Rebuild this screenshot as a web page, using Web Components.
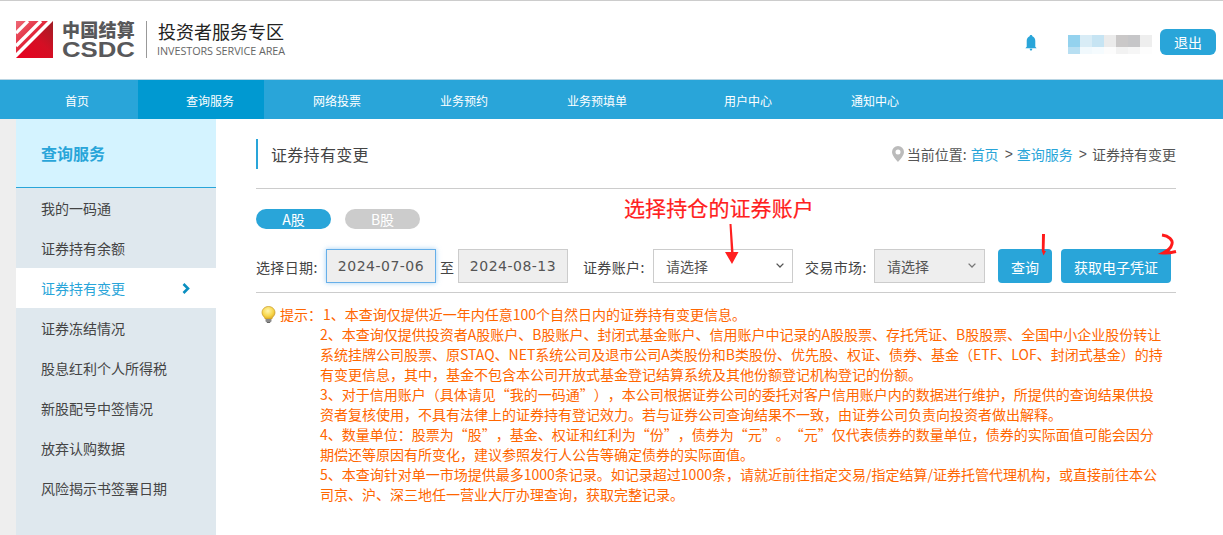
<!DOCTYPE html>
<html lang="zh-CN">
<head>
<meta charset="utf-8">
<title>证券持有变更</title>
<style>
html,body{margin:0;padding:0;background:#fff}
body{font-family:"Noto Sans CJK SC","Noto Sans",sans-serif;font-size:14px;color:#444;height:535px;overflow:hidden;border-top:1px solid #ccc;box-sizing:border-box;text-spacing-trim:space-all}
</style>
</head>
<body>
<csdc-header></csdc-header>
<csdc-nav>
  <csdc-nav-item style="--w:121px;--pl:48px">首页</csdc-nav-item>
  <csdc-nav-item active style="--w:126px;--pl:48px">查询服务</csdc-nav-item>
  <csdc-nav-item>网络投票</csdc-nav-item>
  <csdc-nav-item>业务预约</csdc-nav-item>
  <csdc-nav-item>业务预填单</csdc-nav-item>
  <csdc-nav-item style="margin-left:30px">用户中心</csdc-nav-item>
  <csdc-nav-item>通知中心</csdc-nav-item>
</csdc-nav>
<csdc-layout>
  <csdc-sidebar slot="side" heading="查询服务">
    <csdc-side-item>我的一码通</csdc-side-item>
    <csdc-side-item>证券持有余额</csdc-side-item>
    <csdc-side-item active>证券持有变更</csdc-side-item>
    <csdc-side-item>证券冻结情况</csdc-side-item>
    <csdc-side-item>股息红利个人所得税</csdc-side-item>
    <csdc-side-item>新股配号中签情况</csdc-side-item>
    <csdc-side-item>放弃认购数据</csdc-side-item>
    <csdc-side-item>风险揭示书签署日期</csdc-side-item>
  </csdc-sidebar>
  <csdc-main>
    <csdc-title-row>证券持有变更</csdc-title-row>
    <csdc-tabs></csdc-tabs>
    <csdc-query-form></csdc-query-form>
    <csdc-notes>
      <p>1、本查询仅提供近一年内任意100个自然日内的证券持有变更信息。</p>
      <p>2、本查询仅提供投资者A股账户、B股账户、封闭式基金账户、信用账户中记录的A股股票、存托凭证、B股股票、全国中小企业股份转让系统挂牌公司股票、原STAQ、NET系统公司及退市公司A类股份和B类股份、优先股、权证、债券、基金（ETF、LOF、封闭式基金）的持有变更信息，其中，基金不包含本公司开放式基金登记结算系统及其他份额登记机构登记的份额。</p>
      <p>3、对于信用账户（具体请见“我的一码通”），本公司根据证券公司的委托对客户信用账户内的数据进行维护，所提供的查询结果供投资者复核使用，不具有法律上的证券持有登记效力。若与证券公司查询结果不一致，由证券公司负责向投资者做出解释。</p>
      <p>4、数量单位：股票为“股”，基金、权证和红利为“份”，债券为“元”。“元”仅代表债券的数量单位，债券的实际面值可能会因分期偿还等原因有所变化，建议参照发行人公告等确定债券的实际面值。</p>
      <p>5、本查询针对单一市场提供最多1000条记录。如记录超过1000条，请就近前往指定交易/指定结算/证券托管代理机构，或直接前往本公司京、沪、深三地任一营业大厅办理查询，获取完整记录。</p>
    </csdc-notes>
    <csdc-annotations></csdc-annotations>
  </csdc-main>
</csdc-layout>
<script>
function def(name, html, init){
  customElements.define(name, class extends HTMLElement{
    constructor(){super();this.attachShadow({mode:'open'}).innerHTML=html;}
    connectedCallback(){ if(init) init(this); }
  });
}
const BLUE='#29a5d9';

def('csdc-logo',`<style>
:host{display:flex;align-items:center;height:37px}
svg{display:block;flex:none}
.words{margin-left:9px;width:73px;display:flex;flex-direction:column;justify-content:space-between;height:37px;color:#58585a}
.cn{font-size:18px;line-height:18px;height:18px;font-weight:900;letter-spacing:.25px;white-space:nowrap;margin-top:-1px}
.en{font-family:"Liberation Sans",sans-serif;font-size:22px;line-height:17px;height:17px;font-weight:700;transform:scaleX(1.17);transform-origin:0 50%;white-space:nowrap}
</style>
<svg width="37" height="37" viewBox="0 0 37 37">
<defs>
<linearGradient id="g" x1="0" y1="1" x2="1" y2="0"><stop offset="0" stop-color="#e8001f"/><stop offset=".55" stop-color="#d40f24"/><stop offset="1" stop-color="#9d1f26"/></linearGradient>
<linearGradient id="p" x1="0" y1="0" x2="1" y2="1"><stop offset="0" stop-color="#ee6a78"/><stop offset=".5" stop-color="#e01a2e"/></linearGradient>
</defs>
<rect width="37" height="37" fill="url(#g)"/>
<path d="M0 37V0H37Z" fill="url(#p)"/>
<path d="M0 36.500L36.500 0" stroke="#fff" stroke-width="3.600" fill="none" transform="translate(-1 -1)"/>
<path d="M0 25L25 0" stroke="#fff" stroke-width="3.400" fill="none"/>
<path d="M0 12L12 0" stroke="#fff" stroke-width="3.200" fill="none"/>
</svg>
<div class="words"><div class="cn">中国结算</div><div class="en">CSDC</div></div>`);

def('csdc-mosaic',`<style>
:host{display:grid;grid-template-columns:repeat(7,12px);grid-template-rows:12px 7px;width:84px;height:19px}
i{display:block}
</style>`+['#94d2ee','#d8ecf6','#c6e4f3','#ebebeb','#cac8c8','#c6c6c8','#eeeeee','#b8dff2','#f1f9fd','#f5fbfe','#fcfcfc','#f2f2f2','#f6f6f6','#fdfdfd'].map(c=>`<i style="background:${c}"></i>`).join(''));

def('csdc-header',`<style>
:host{display:flex;align-items:center;height:78px;padding:0 7px 2px 16px;background:#fff;box-sizing:border-box}
.sep{width:1px;height:37px;background:#999;margin:0 11px 0 11px}
.brand{display:flex;flex-direction:column;height:37px;justify-content:space-between}
.t{font-size:18px;line-height:20px;color:#222;white-space:nowrap;margin-top:0}
.s{font-family:"Open Sans",sans-serif;font-size:10.800px;line-height:14px;color:#666;white-space:nowrap;margin-left:-1px;letter-spacing:-.05px}
.sp{flex:1}
svg{display:block;margin-top:8px}
csdc-mosaic{margin:11px 8px 0 31px}
.out{width:56px;height:26px;margin-top:6px;border-radius:6px;background:${BLUE};color:#fff;font-size:14px;line-height:26px;text-align:center}
</style>
<csdc-logo></csdc-logo><div class="sep"></div>
<div class="brand"><div class="t">投资者服务专区</div><div class="s">INVESTORS SERVICE AREA</div></div>
<div class="sp"></div>
<svg width="12" height="16" viewBox="0 0 14 17" preserveAspectRatio="none"><path fill="${BLUE}" d="M7 0c.9 0 1.500.5 1.600 1.200C10.700 1.900 12 3.800 12 6.200V12.600L13.600 14H.4L2 12.600V6.200C2 3.800 3.300 1.900 5.400 1.200 5.500.5 6.100 0 7 0ZM5.500 14.700H8.500C8.500 15.900 7.800 16.700 7 16.700S5.500 15.900 5.500 14.700Z"/></svg>
<csdc-mosaic></csdc-mosaic>
<div class="out">退出</div>`);

def('csdc-nav',`<style>
:host{display:flex;height:40px;padding-left:17px;background:${BLUE};border-top:1px solid #b9d5e3;box-sizing:border-box}
</style><slot></slot>`);

def('csdc-nav-item',`<style>
:host{display:block;box-sizing:border-box;width:var(--w,127px);padding-left:var(--pl,49px);height:39px;line-height:41px;font-size:12px;color:#fff;white-space:nowrap;flex:none}
:host([active]){background:#0099d1}
</style><slot></slot>`);

def('csdc-layout',`<style>
:host{display:flex;height:416px;padding-left:16px;background:linear-gradient(90deg,#eee 16px,#fff 16px);box-sizing:border-box}
</style><slot name="side"></slot><slot></slot>`);

def('csdc-sidebar',`<style>
:host{display:block;width:200px;flex:none;background:#dfe8ee;height:100%}
h2{margin:0;height:69px;box-sizing:border-box;padding-left:25px;background:#d4f3ff;border-bottom:1px solid ${BLUE};font-size:16px;line-height:68px;font-weight:700;color:${BLUE}}
</style><h2></h2><slot></slot>`,el=>{el.shadowRoot.querySelector('h2').textContent=el.getAttribute('heading');});

def('csdc-side-item',`<style>
:host{display:flex;align-items:center;justify-content:space-between;height:40px;padding:0 26px 0 25px;font-size:14px;color:#444}
:host([active]){background:#fff;color:${BLUE}}
svg{display:none}
:host([active]) svg{display:block}
</style><span><slot></slot></span><svg width="8" height="11" viewBox="0 0 8 11"><path d="M1.500 1L6 5.500L1.500 10" fill="none" stroke="#0a8fc0" stroke-width="2.600"/></svg>`);

def('csdc-main',`<style>
:host{display:block;position:relative;flex:none;width:920px;margin-left:40px}
</style><slot></slot>`);

def('csdc-title-row',`<style>
:host{display:flex;align-items:center;justify-content:space-between;height:30px;padding-top:20px;padding-bottom:19px;box-sizing:content-box;border-bottom:1px solid #ccc}
.t{border-left:2px solid ${BLUE};padding-left:13px;height:30px;line-height:30px;font-size:16px;letter-spacing:.3px;color:#444}
.c{display:flex;align-items:center;font-size:14px;color:#555;white-space:nowrap;height:30px}
svg{display:block;margin-right:3px}
a{color:${BLUE};text-decoration:none}
.g{font-family:"Liberation Sans",sans-serif}
.h{margin-left:4px}
</style>
<div class="t"><slot></slot></div>
<div class="c"><svg width="12" height="16" viewBox="0 0 12 16"><path fill-rule="evenodd" fill="#bbb" d="M6 0a6 6 0 0 1 6 6C12 9.500 8 13.500 6 16 4 13.500 0 9.500 0 6a6 6 0 0 1 6-6ZM6 3.500a2.500 2.500 0 1 0 0 5 2.500 2.500 0 0 0 0-5Z"/></svg>
<span>当前位置:</span><a class="h">首页</a><span class="g" style="margin:0 4px 0 6px">&gt;</span><a>查询服务</a><span class="g" style="margin:0 5px 0 6px">&gt;</span><span>证券持有变更</span></div>`);

def('csdc-tabs',`<style>
:host{display:flex;gap:14px;margin-top:20px}
span{width:75px;height:20px;border-radius:10px;text-align:center;line-height:20px;font-size:14px;color:#fff;background:#ccc}
.on{background:${BLUE}}
</style><span class="on">A股</span><span>B股</span>`);

def('csdc-select',`<style>
:host{display:block;position:relative;flex:none}
select{display:block;width:100%;box-sizing:border-box;height:34px;border:1px solid #ccc;border-radius:0;font:14px "Noto Sans CJK SC",sans-serif;color:#555;background:var(--bg,#fff);padding:0 12px;margin:0;appearance:none;-webkit-appearance:none}
svg{position:absolute;right:9px;top:14px;pointer-events:none}
</style><select><option>请选择</option></select><svg width="8" height="5" viewBox="0 0 8 5"><path d="M.6.6L4 4L7.400.6" fill="none" stroke="var(--ch,#555)" stroke-width="1.300"/></svg>`);

def('csdc-query-form',`<style>
:host{display:flex;margin-top:20px;height:44px;box-sizing:border-box;align-items:flex-start;border-bottom:1px solid #ccc;font-size:14px;color:#444}
label{display:block;white-space:nowrap;line-height:36px;letter-spacing:.35px}
.box{box-sizing:border-box;width:110px;height:34px;border:1px solid #ccc;background:#eee;text-align:center;font-family:"DejaVu Sans",sans-serif;font-size:14px;letter-spacing:.5px;line-height:33px;color:#555}
.box.focus{border-color:#66afe9;box-shadow:0 0 5px rgba(102,175,233,.6)}
.btn{box-sizing:border-box;height:34px;border-radius:4px;background:${BLUE};color:#fff;line-height:36px;text-align:center;font-size:14px}
</style>
<label style="width:70px">选择日期:</label>
<div class="box focus" role="textbox">2024-07-06</div>
<label style="width:22px;text-align:center;letter-spacing:0">至</label>
<div class="box" role="textbox">2024-08-13</div>
<label style="width:70px;margin-left:15px">证券账户:</label>
<csdc-select style="width:140px"></csdc-select>
<label style="width:69px;margin-left:12px">交易市场:</label>
<csdc-select style="width:111px;--bg:#eee;--ch:#777"></csdc-select>
<div class="btn" style="width:54px;margin-left:13px">查询</div>
<div class="btn" style="width:110px;margin-left:9px">获取电子凭证</div>`);

def('csdc-notes',`<style>
:host{display:flex;margin-top:11px;padding-left:5px;font-size:14px;line-height:20px;color:#ff6600}
svg{display:block;flex:none;margin-top:2px}
.l{flex:none;width:40px;margin-left:4px;white-space:nowrap}
.b{flex:none;width:845px}
::slotted(p){margin:0}
::slotted(p:first-child){padding-left:3px}
</style>
<svg width="15" height="17" viewBox="0 0 15 17"><defs><radialGradient id="b" cx=".45" cy=".35" r=".7"><stop offset="0" stop-color="#fff6b0"/><stop offset=".6" stop-color="#f8d64a"/><stop offset="1" stop-color="#d9a520"/></radialGradient></defs>
<path fill="url(#b)" stroke="#c79a2a" stroke-width=".7" d="M7.500.5C3.800.5 1 3.200 1 6.500c0 2.300 1.300 3.500 2.300 4.800.5.700.7 1.200.8 1.700h6.800c.1-.5.3-1 .8-1.700C12.700 10 14 8.800 14 6.500 14 3.200 11.200.5 7.500.5Z"/>
<rect x="4.500" y="13" width="6" height="3" rx="1" fill="#8a8a8a"/><rect x="5.800" y="16" width="3.400" height="1" fill="#666"/></svg>
<div class="l">提示：</div><div class="b"><slot></slot></div>`);

def('csdc-annotations',`<style>
:host{position:absolute;left:0;top:0;width:100%;height:100%;pointer-events:none;display:block}
svg{position:absolute;left:0;top:0;overflow:visible}
span{position:absolute;left:368px;top:73px;font-size:21px;line-height:30px;letter-spacing:.1px;color:#ff2020;white-space:nowrap;-webkit-text-stroke:.2px #ff2020}
</style>
<span>选择持仓的证券账户</span>
<svg width="920" height="416" viewBox="256 120 920 416">
<path fill="#ff2020" d="M729.500 225L731.500 225L733.500 253L738.500 253L732 265L725 253L731 253Z"/>
<path fill="#ff1a1a" d="M1042 235L1045 235L1044.500 252L1046 252L1043.500 256.500L1041.800 252Z"/>
<path d="M1162 236C1169 237 1173 241 1172 245C1171 250 1167 252 1163 254C1168 254.500 1172 253.500 1176 252.500" stroke="#ff1a1a" stroke-width="3" fill="none"/>
</svg>`);
</script>
</body>
</html>
